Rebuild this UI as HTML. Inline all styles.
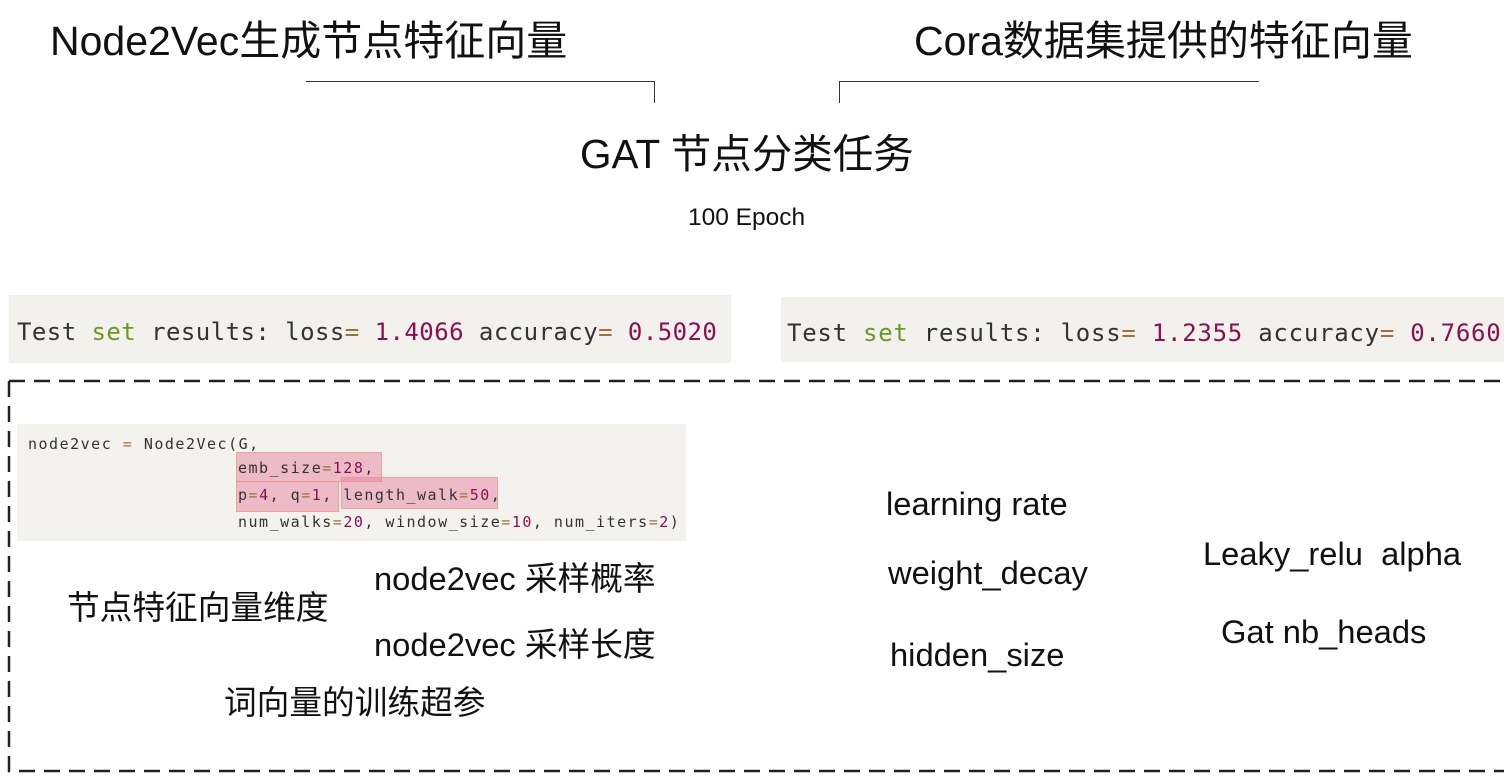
<!DOCTYPE html>
<html><head><meta charset="utf-8"><style>
body{margin:0;width:1504px;height:783px;background:#fff;position:relative;overflow:hidden;font-family:"Liberation Sans","Noto Sans CJK SC",sans-serif;color:#111}
.t{position:absolute;white-space:nowrap;line-height:1}
.mono{font-family:"DejaVu Sans Mono","Liberation Mono",monospace}
.res{position:absolute;background:#f2f1ee;color:#333}
.res span.t{font-size:24px;letter-spacing:0.75px}
.g{color:#6a9a1f}.m{color:#8b1050}.o{color:#a0703a}
.code{position:absolute;left:17px;top:424px;width:669px;height:117px;background:#f3f2ef}
.code .l{position:absolute;font-size:15px;color:#333;letter-spacing:1.5px;white-space:pre;font-family:"DejaVu Sans Mono","Liberation Mono",monospace}
.hl{position:absolute;background:rgba(230,120,150,.45);border:1px solid rgba(240,150,130,.7)}
.b{font-size:32.7px}
</style></head><body>
<div class="t" style="left:50px;top:21px;font-size:41px">Node2Vec生成节点特征向量</div>
<div class="t" style="left:914px;top:21px;font-size:41px">Cora数据集提供的特征向量</div>
<div style="position:absolute;left:306px;top:81px;width:348px;height:1px;background:#333"></div>
<div style="position:absolute;left:654px;top:81px;width:1px;height:22px;background:#333"></div>
<div style="position:absolute;left:839px;top:81px;width:420px;height:1px;background:#333"></div>
<div style="position:absolute;left:839px;top:81px;width:1px;height:22px;background:#333"></div>
<div class="t" style="left:580px;top:134px;font-size:40.5px">GAT 节点分类任务</div>
<div class="t" style="left:688px;top:206px;font-size:24.5px">100 Epoch</div>

<div class="res" style="left:9px;top:295px;width:722px;height:68px"><span class="t mono" style="left:8px;top:25px;letter-spacing:0.45px">Test <span class="g">set</span> results: loss<span class="o">=</span> <span class="m">1.4066</span> accuracy<span class="o">=</span> <span class="m">0.5020</span></span></div>
<div class="res" style="left:781px;top:297px;width:723px;height:65px"><span class="t mono" style="left:6px;top:24px">Test <span class="g">set</span> results: loss<span class="o">=</span> <span class="m">1.2355</span> accuracy<span class="o">=</span> <span class="m">0.7660</span></span></div>

<svg style="position:absolute;left:0;top:0" width="1504" height="783">
<path d="M9 381 H1504 M9 381 V771 H1504" fill="none" stroke="#222" stroke-width="2.5" stroke-dasharray="16 9"/>
</svg>

<div class="code">
<div class="hl" style="left:219px;top:28px;width:144px;height:28px"></div>
<div class="hl" style="left:219px;top:57px;width:101px;height:29px"></div>
<div class="hl" style="left:324px;top:53px;width:155px;height:30px"></div>
<div class="l" style="left:11px;top:11px">node2vec <span class="o">=</span> Node2Vec(G,</div>
<div class="l" style="left:221px;top:35px">emb_size<span class="o">=</span><span class="m">128</span>,</div>
<div class="l" style="left:221px;top:62px">p<span class="o">=</span><span class="m">4</span>, q<span class="o">=</span><span class="m">1</span>, length_walk<span class="o">=</span><span class="m">50</span>,</div>
<div class="l" style="left:221px;top:89px">num_walks<span class="o">=</span><span class="m">20</span>, window_size<span class="o">=</span><span class="m">10</span>, num_iters<span class="o">=</span><span class="m">2</span>)</div>
</div>

<div class="t b" style="left:67px;top:592px">节点特征向量维度</div>
<div class="t b" style="left:374px;top:563px">node2vec 采样概率</div>
<div class="t b" style="left:374px;top:629px">node2vec 采样长度</div>
<div class="t b" style="left:224px;top:687px">词向量的训练超参</div>
<div class="t b" style="left:886px;top:488px">learning rate</div>
<div class="t b" style="left:888px;top:557px">weight_decay</div>
<div class="t b" style="left:890px;top:639px">hidden_size</div>
<div class="t b" style="left:1203px;top:538px">Leaky_relu&nbsp;&nbsp;alpha</div>
<div class="t b" style="left:1221px;top:616px">Gat nb_heads</div>
</body></html>
